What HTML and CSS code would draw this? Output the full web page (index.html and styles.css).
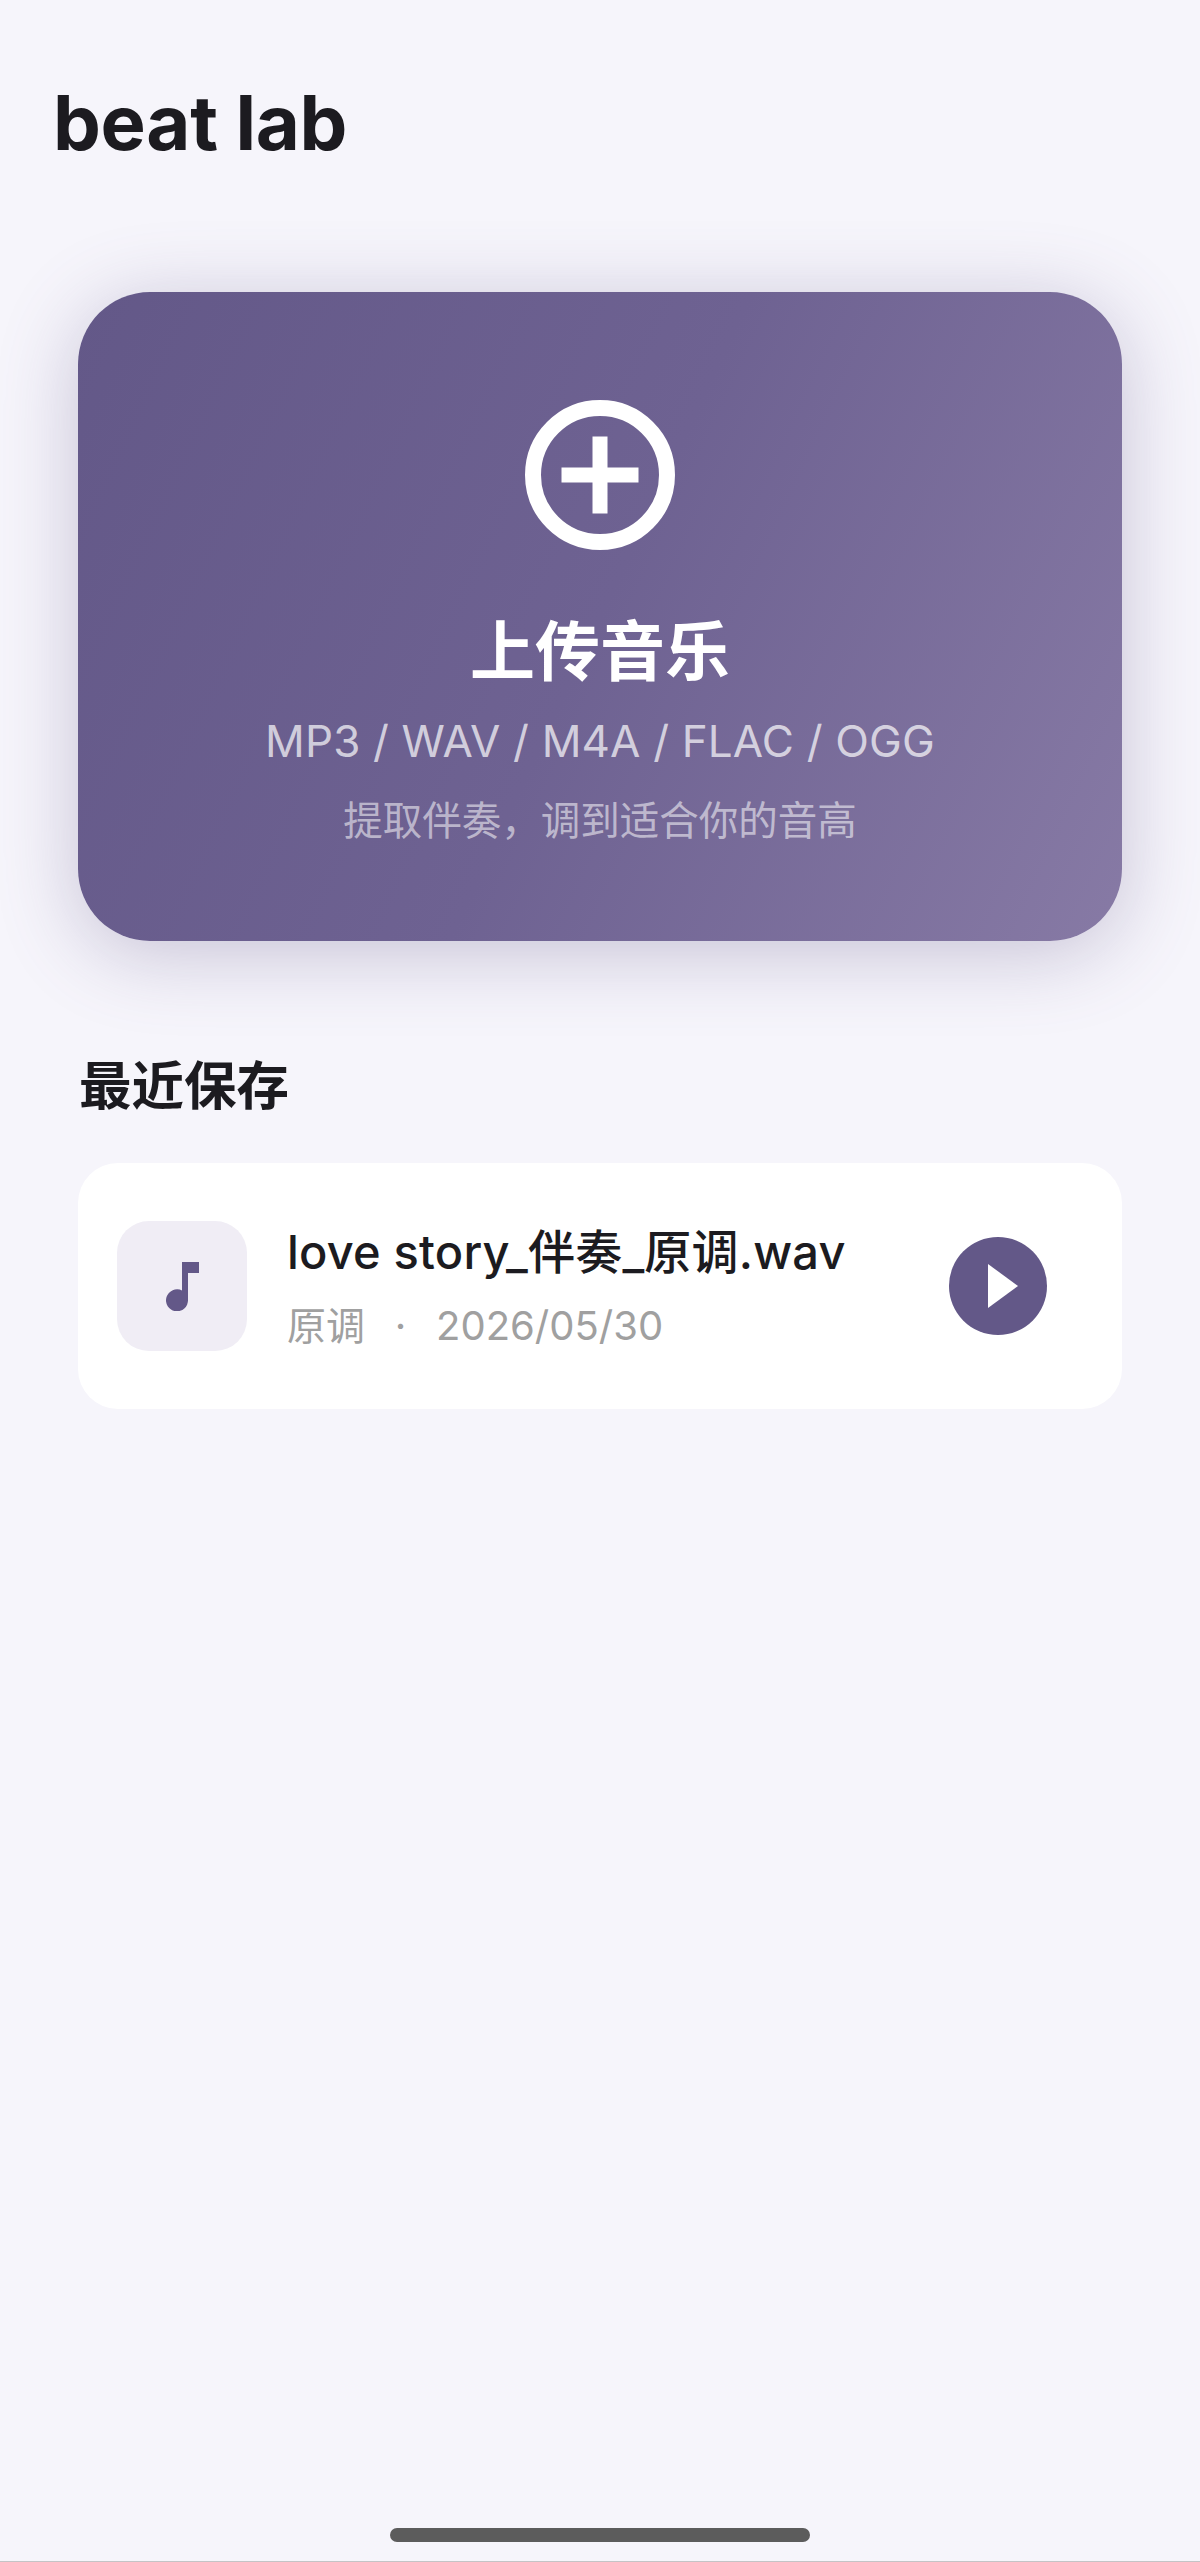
FILE: index.html
```html
<!DOCTYPE html>
<html lang="zh-CN">
<head>
<meta charset="utf-8">
<title>beat lab</title>
<link rel="stylesheet" href="styles.css">
</head>
<body>
<main class="app">
  <h1 class="brand">beat lab</h1>
  <section class="content">
    <div class="upload">
      <svg class="upload-icon" viewBox="0 0 150 150" aria-hidden="true">
        <circle cx="75" cy="75" r="67" fill="none" stroke="#fff" stroke-width="16"/>
        <path d="M36.500 75H113.500M75 36.500V113.500" fill="none" stroke="#fff" stroke-width="15"/>
      </svg>
      <h2 class="upload-title">上传音乐</h2>
      <p class="upload-formats">MP3 / WAV / M4A / FLAC / OGG</p>
      <p class="upload-hint">提取伴奏，调到适合你的音高</p>
    </div>
    <h2 class="section-title">最近保存</h2>
    <div class="track">
      <div class="track-thumb">
        <svg class="note-icon" viewBox="0 0 33 49" aria-hidden="true">
          <path d="M16 0H33V11H22V38A11 11 0 1 1 16 28.500Z" fill="#635888"/>
        </svg>
      </div>
      <div class="track-info">
        <div class="track-name">love story_伴奏_原调.wav</div>
        <div class="track-meta"><span class="meta-key">原调</span><span class="dot">·</span><span>2026/05/30</span></div>
      </div>
      <button class="play" type="button" aria-label="播放">
        <svg class="play-icon" viewBox="0 0 30 44" aria-hidden="true"><path d="M0 0L30 22L0 44Z" fill="#fff"/></svg>
      </button>
    </div>
  </section>
  <div class="home-bar"></div>
</main>
</body>
</html>
```
FILE: styles.css
```css
* { box-sizing: border-box; }
html, body { margin: 0; padding: 0; }
body {
  background: #f6f5fb;
  font-family: "Inter", "Noto Sans CJK SC", sans-serif;
  color: #1c1b20;
}
.app {
  height: 2562px;
  display: flex;
  flex-direction: column;
  border-bottom: 1px solid #c4c4c6;
  overflow: hidden;
}
.brand {
  margin: 0;
  padding: 76px 0 0 53px;
  font-size: 76px;
  line-height: 92px;
  font-weight: 700;
  letter-spacing: -0.3px;
}
.content {
  padding: 124px 78px 0;
  display: flex;
  flex-direction: column;
}
.upload {
  height: 649px;
  border-radius: 72px;
  background: linear-gradient(115deg, #635888 0%, #6e6292 50%, #877aa5 100%);
  box-shadow: 0 12px 80px rgba(99, 88, 136, 0.32);
  display: flex;
  flex-direction: column;
  align-items: center;
  padding-top: 108px;
  color: #fff;
}
.upload-icon { width: 150px; height: 150px; display: block; }
.upload-title {
  margin: 60px 0 0;
  font-size: 65px;
  line-height: 84px;
  font-weight: 700;
}
.upload-formats {
  margin: 19px 0 0;
  font-size: 44px;
  line-height: 56px;
  font-weight: 400;
  letter-spacing: 0.15px;
  color: rgba(255, 255, 255, 0.7);
}
.upload-hint {
  margin: 24px 0 0;
  font-size: 39.5px;
  line-height: 56px;
  color: rgba(255, 255, 255, 0.55);
}
.section-title {
  margin: 111px 0 0 1px;
  font-size: 52.500px;
  line-height: 68px;
  font-weight: 700;
}
.track {
  margin-top: 43px;
  height: 246px;
  background: #fff;
  border-radius: 40px;
  display: flex;
  align-items: center;
  padding-left: 39px;
}
.track-thumb {
  width: 130px;
  height: 130px;
  flex: none;
  border-radius: 32px;
  background: #f0edf5;
  display: flex;
  align-items: center;
  justify-content: center;
}
.note-icon { width: 33px; height: 49px; display: block; }
.track-info { margin-left: 40px; flex: 1; min-width: 0; }
.track-name {
  font-size: 47px;
  line-height: 66px;
  font-weight: 500;
  letter-spacing: 0.2px;
}
.track-meta {
  margin-top: 14px;
  font-size: 40px;
  line-height: 54px;
  color: #a0a0a0;
  display: flex;
}
.meta-key { font-size: 39px; }
.dot { width: 71px; text-align: center; }
.play {
  width: 98px;
  height: 98px;
  flex: none;
  margin-right: 75px;
  border: 0;
  border-radius: 50%;
  padding: 0 0 0 10px;
  background: #635888;
  display: flex;
  align-items: center;
  justify-content: center;
}
.play-icon { width: 30px; height: 44px; display: block; }
.home-bar {
  width: 420px;
  height: 14px;
  margin: auto auto 19px;
  border-radius: 7px;
  background: #5c5c5c;
}
```
